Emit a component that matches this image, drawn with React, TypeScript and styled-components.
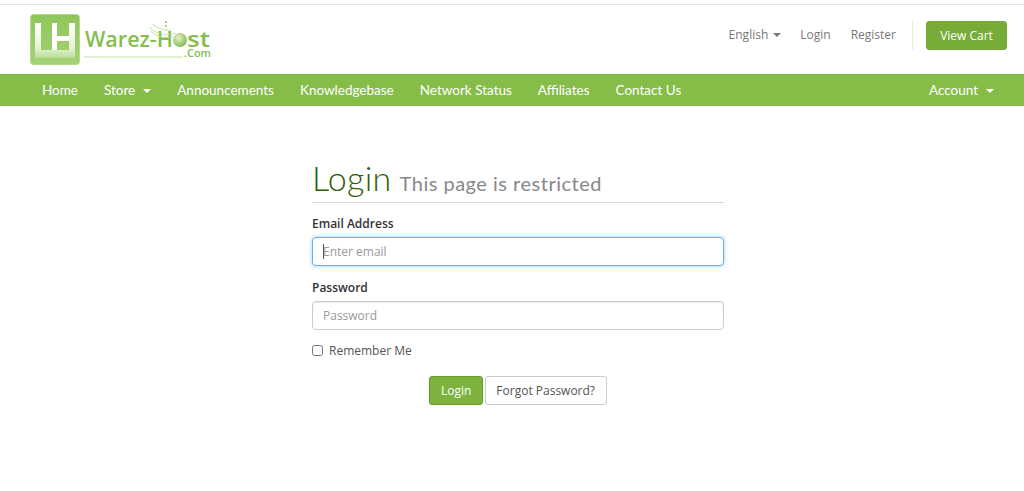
import React from 'react';
import styled, { createGlobalStyle } from 'styled-components';

const GlobalStyle = createGlobalStyle`
  html, body {
    margin: 0;
    padding: 0;
    background: #fff;
    font-family: 'Open Sans', sans-serif;
    color: #333;
  }
  * { box-sizing: border-box; }
`;

const Page = styled.div`
  padding-top: 4px;
`;

const Header = styled.header`
  border-top: 1px solid #e2e2e8;
  height: 70px;
  padding: 8px 17px 0 30px;
  display: flex;
  justify-content: space-between;
  align-items: flex-start;
`;

const LogoSvg = styled.svg`
  display: block;
`;

const TopLinks = styled.div`
  display: flex;
  align-items: center;
  height: 29px;
  margin-top: 8px;
`;

const TopLink = styled.a<{ $gap: number }>`
  font-size: 12px;
  color: #777;
  margin-right: ${p => p.$gap}px;
  padding-bottom: 2px;
  display: flex;
  align-items: center;
`;

const Caret = styled.span<{ $color: string; $gap: number }>`
  display: inline-block;
  width: 0;
  height: 0;
  margin-left: ${p => p.$gap}px;
  margin-top: 1px;
  border-top: 4px solid ${p => p.$color};
  border-left: 4px solid transparent;
  border-right: 4px solid transparent;
`;

const Divider = styled.div`
  width: 1px;
  height: 29px;
  background: #e8e8e8;
  margin-right: 13px;
`;

const CartButton = styled.a`
  width: 81px;
  height: 29px;
  background: #77ac38;
  border: 1px solid #74a936;
  border-radius: 3px;
  color: #fff;
  font-size: 12px;
  display: flex;
  align-items: center;
  justify-content: center;
`;

const Nav = styled.nav`
  height: 32px;
  background: #85bd48;
  padding: 0 17px 0 29px;
  display: flex;
  justify-content: space-between;
  align-items: center;
`;

const NavList = styled.div`
  display: flex;
  align-items: center;
`;

const NavLink = styled.a`
  font-family: 'Lato', sans-serif;
  font-size: 13.5px;
  color: #fff;
  padding: 0 13px;
  display: flex;
  align-items: center;
`;

const Main = styled.main`
  width: 412px;
  margin: 49px auto 0 312px;
`;

const TitleRow = styled.div`
  border-bottom: 1px solid #d8d8d8;
  height: 48px;
  display: flex;
  align-items: baseline;
  white-space: nowrap;
`;

const Title = styled.h1`
  margin: 0;
  font-family: 'Lato', sans-serif;
  font-weight: 300;
  font-size: 34px;
  line-height: 46px;
  color: #2f5c05;
  letter-spacing: 0.3px;
`;

const Subtitle = styled.small`
  font-family: 'Lato', sans-serif;
  font-weight: 400;
  font-size: 20px;
  color: #888;
  margin-left: 8px;
  letter-spacing: 0.5px;
`;

const Field = styled.div<{ $top: number }>`
  margin-top: ${p => p.$top}px;
`;

const Label = styled.label`
  display: block;
  font-size: 12px;
  font-weight: 600;
  line-height: 17px;
  color: #333;
  margin-bottom: 5px;
`;

const InputWrap = styled.div`
  position: relative;
`;

const Input = styled.input<{ $focused?: boolean }>`
  display: block;
  width: 100%;
  height: 29px;
  padding: 0 10px;
  font-family: 'Open Sans', sans-serif;
  font-size: 12px;
  color: #555;
  background: #fff;
  border-radius: 4px;
  outline: none;
  border: 1px solid ${p => (p.$focused ? '#66afe9' : '#ccc')};
  box-shadow: ${p => (p.$focused ? '0 0 4px rgba(102,175,233,.6)' : 'inset 0 1px 1px rgba(0,0,0,.075)')};
  &::placeholder { color: #999; opacity: 1; }
`;

const TextCursor = styled.span`
  position: absolute;
  left: 11px;
  top: 7px;
  width: 1px;
  height: 15px;
  background: #555;
`;

const RememberRow = styled.label`
  display: flex;
  align-items: center;
  margin-top: 12px;
  height: 17px;
  font-size: 12px;
  color: #555;
`;

const Check = styled.input`
  width: 11px;
  height: 11px;
  margin: 0 6px 0 0;
  accent-color: #777;
`;

const Actions = styled.div`
  display: flex;
  justify-content: center;
  gap: 2px;
  margin-top: 17px;
`;

const Button = styled.button<{ $primary?: boolean }>`
  height: 29px;
  padding: 0 10.5px;
  border-radius: 3px;
  font-family: 'Open Sans', sans-serif;
  font-size: 12px;
  color: ${p => (p.$primary ? '#fff' : '#555')};
  background: ${p => (p.$primary ? '#7db23f' : '#fff')};
  border: 1px solid ${p => (p.$primary ? '#659a27' : '#ccc')};
`;

const Logo = () => (
  <LogoSvg width="184" height="53" viewBox="0 0 184 53">
    <defs>
      <linearGradient id="tile" x1="0" y1="0" x2="0" y2="1">
        <stop offset="0" stopColor="#8fc65a" />
        <stop offset="1" stopColor="#a4d277" />
      </linearGradient>
      <linearGradient id="stroke" x1="0" y1="0" x2="0" y2="1">
        <stop offset="0" stopColor="#ffffff" />
        <stop offset="0.7" stopColor="#e6f3d6" />
        <stop offset="1" stopColor="#b9de94" />
      </linearGradient>
      <radialGradient id="ball" cx="0.4" cy="0.35" r="0.7">
        <stop offset="0" stopColor="#e4f3d0" />
        <stop offset="1" stopColor="#7db648" />
      </radialGradient>
    </defs>
    <rect x="0.5" y="1.5" width="49" height="50" rx="3" fill="url(#tile)" stroke="#b5da8e" />
    <path d="M5 10h6v27h28V10h6v35H5z" fill="url(#stroke)" />
    <path d="M22 10h5v13h12v5H27v9h-5z" fill="#fff" />
    <text x="55" y="34" fontFamily="'Open Sans', sans-serif" fontWeight="600" fontSize="21" fill="#85bd4f" textLength="88" lengthAdjust="spacingAndGlyphs">
      Warez-H
    </text>
    <circle cx="150" cy="27" r="7" fill="url(#ball)" />
    <text x="157" y="34" fontFamily="'Open Sans', sans-serif" fontWeight="600" fontSize="21" fill="#85bd4f" textLength="23" lengthAdjust="spacingAndGlyphs">
      st
    </text>
    <path d="M120 14c2 6 18 10 26 6M121 18c3 5 15 8 22 6M123 11c3 4 12 7 18 6" fill="none" stroke="#b5da8e" strokeWidth="0.8" />
    <circle cx="136" cy="9" r="0.9" fill="#85bd48" />
    <circle cx="136" cy="13" r="0.9" fill="#85bd48" />
    <line x1="54" y1="44" x2="153" y2="44" stroke="#c4e2a4" strokeWidth="1" />
    <text x="154" y="44" fontFamily="'Open Sans', sans-serif" fontWeight="600" fontSize="11.5" fill="#85bd4f" textLength="27" lengthAdjust="spacingAndGlyphs">
      .Com
    </text>
  </LogoSvg>
);

export default function App() {
  return (
    <Page>
      <GlobalStyle />
      <Header>
        <Logo />
        <TopLinks>
          <TopLink $gap={19}>English<Caret $color="#777" $gap={5} /></TopLink>
          <TopLink $gap={20}>Login</TopLink>
          <TopLink $gap={16}>Register</TopLink>
          <Divider />
          <CartButton>View Cart</CartButton>
        </TopLinks>
      </Header>
      <Nav>
        <NavList>
          <NavLink>Home</NavLink>
          <NavLink>Store<Caret $color="#fff" $gap={8} /></NavLink>
          <NavLink>Announcements</NavLink>
          <NavLink>Knowledgebase</NavLink>
          <NavLink>Network Status</NavLink>
          <NavLink>Affiliates</NavLink>
          <NavLink>Contact Us</NavLink>
        </NavList>
        <NavLink>Account<Caret $color="#fff" $gap={8} /></NavLink>
      </Nav>
      <Main>
        <TitleRow>
          <Title>Login</Title>
          <Subtitle>This page is restricted</Subtitle>
        </TitleRow>
        <Field $top={12}>
          <Label>Email Address</Label>
          <InputWrap>
            <Input $focused placeholder="Enter email" />
            <TextCursor />
          </InputWrap>
        </Field>
        <Field $top={13}>
          <Label>Password</Label>
          <Input placeholder="Password" type="password" />
        </Field>
        <RememberRow><Check type="checkbox" />Remember Me</RememberRow>
        <Actions>
          <Button $primary>Login</Button>
          <Button>Forgot Password?</Button>
        </Actions>
      </Main>
    </Page>
  );
}
